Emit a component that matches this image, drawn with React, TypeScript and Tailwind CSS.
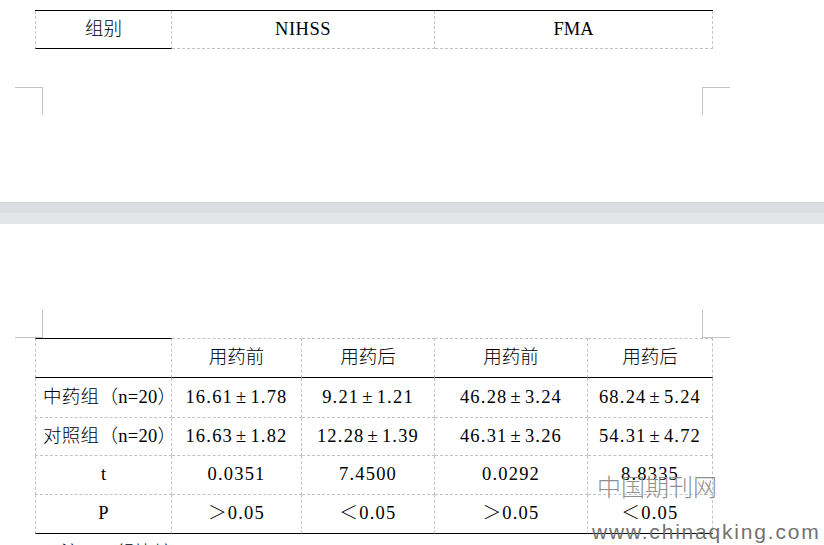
import React from "react";

const dash = "border-dashed border-[#c4c4c4]";
const font = "font-['Liberation_Serif','Noto_Sans_CJK_SC',serif]";

const rows: { label: string; left: boolean; vals: string[]; h: string }[] = [
  { label: "中药组（n=20）", left: true, vals: ["16.61±1.78", "9.21±1.21", "46.28±3.24", "68.24±5.24"], h: "h-[40px]" },
  { label: "对照组（n=20）", left: true, vals: ["16.63±1.82", "12.28±1.39", "46.31±3.26", "54.31±4.72"], h: "h-[38px]" },
  { label: "t", left: false, vals: ["0.0351", "7.4500", "0.0292", "8.8335"], h: "h-[39px]" },
  { label: "P", left: false, vals: ["＞0.05", "＜0.05", "＞0.05", "＜0.05"], h: "h-[39px]" },
];

function Val({ v }: { v: string }) {
  const parts = v.split("±");
  if (parts.length === 1) return <>{v}</>;
  return (
    <>
      {parts[0]}
      <span className="mx-[3px]">±</span>
      {parts[1]}
    </>
  );
}

export default function App() {
  return (
    <div className={`relative w-[824px] h-[545px] overflow-hidden bg-white text-black ${font} text-[18.5px] font-light`}>
      {/* Page 1 bottom */}
      <div className="h-[202px] pt-[10px]">
        <div className="ml-[35px] w-[678px] border-t border-black flex">
          <div className={`w-[137px] h-[38px] flex items-center justify-center border-l border-r ${dash} border-b border-b-black`} style={{ borderBottomStyle: "solid" }}>
            组别
          </div>
          <div className={`w-[263px] h-[38px] flex items-center justify-center border-r border-b ${dash} tracking-[0.5px]`}>NIHSS</div>
          <div className={`w-[278px] h-[38px] flex items-center justify-center border-r border-b ${dash}`}>FMA</div>
        </div>
        <div className="mt-[38px] flex">
          <div className="ml-[15px] w-[28px] h-[28px] border-t border-r border-[#c3c3c3]" />
          <div className="ml-[659px] w-[28px] h-[28px] border-t border-l border-[#c3c3c3]" />
        </div>
      </div>

      {/* Page gap */}
      <div className="h-px bg-[#d2d3d6]" />
      <div className="h-[10px] bg-[#dcdde0]" />
      <div className="h-[11px] bg-[#e4e5e7]" />

      {/* Page 2 top */}
      <div className="pt-[86px]">
        <div className="flex">
          <div className="ml-[15px] w-[28px] h-[28px] border-b border-r border-[#c3c3c3]" />
          <div className="ml-[659px] w-[28px] h-[28px] border-b border-l border-[#c3c3c3]" />
        </div>
        <div className="ml-[35px] w-[678px]">
          {/* header */}
          <div className="flex h-[40px]">
            <div
              className="w-[137px] border-t border-t-black border-l border-l-[#c4c4c4] border-dashed border-r border-r-[#c4c4c4] border-b border-b-black"
              style={{ borderTopStyle: "solid", borderBottomStyle: "solid" }}
            />
            {[
              ["用药前", "w-[130px]"],
              ["用药后", "w-[133px]"],
              ["用药前", "w-[153px]"],
              ["用药后", "w-[125px]"],
            ].map(([t, w], i) => (
              <div
                key={i}
                className={`${w} flex items-center justify-center border-t border-t-[#c4c4c4] border-dashed border-r border-r-[#c4c4c4] border-b border-b-black`}
                style={{ borderBottomStyle: "solid" }}
              >
                {t}
              </div>
            ))}
          </div>
          {rows.map((r, ri) => {
            const last = ri === rows.length - 1;
            const bottom = last ? "border-b-black" : "border-b-[#c4c4c4]";
            const bStyle: React.CSSProperties = last ? { borderBottomStyle: "solid" } : {};
            return (
              <div key={ri} className={`flex ${r.h}`}>
                <div
                  className={`w-[137px] flex items-center ${r.left ? "justify-start pl-[7px] tracking-[0.3px]" : "justify-center"} border-l border-r border-b border-dashed border-l-[#c4c4c4] border-r-[#c4c4c4] ${bottom} whitespace-nowrap`}
                  style={bStyle}
                >
                  {r.label}
                </div>
                {r.vals.map((v, vi) => (
                  <div
                    key={vi}
                    className={`${["w-[130px]", "w-[133px]", "w-[153px]", "w-[125px]"][vi]} flex items-center justify-center border-r border-b border-dashed border-r-[#c4c4c4] ${bottom} whitespace-nowrap tracking-[1.2px]`}
                    style={bStyle}
                  >
                    <Val v={v} />
                  </div>
                ))}
              </div>
            );
          })}
          <div className="pl-[26px] pt-[7px] leading-[24px]">注：两组比较</div>
        </div>
      </div>

      {/* watermark */}
      <div className="absolute left-[597px] top-[474px] text-[24px] leading-none font-['Noto_Sans_CJK_SC',sans-serif] font-light text-[#8f8f8f]">
        中国期刊网
      </div>
      <div className="absolute left-[592px] top-[521px] text-[21px] leading-none font-['Liberation_Sans',sans-serif] font-normal text-[#727272] tracking-[1.8px]">
        www.chinaqking.com
      </div>
    </div>
  );
}
